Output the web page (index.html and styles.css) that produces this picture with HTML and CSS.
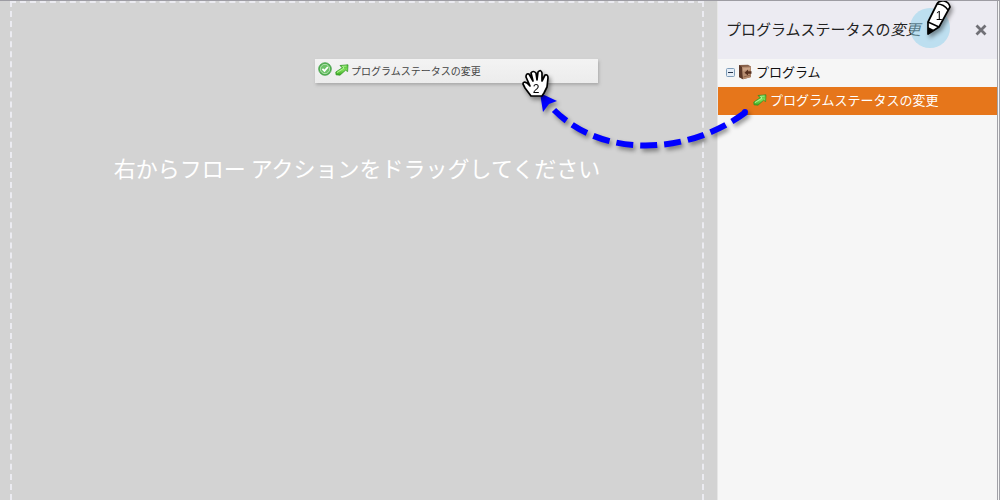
FILE: index.html
```html
<!DOCTYPE html>
<html lang="ja">
<head>
<meta charset="utf-8">
<title>フロー</title>
<link rel="stylesheet" href="styles.css">
</head>
<body>
<svg class="defs" width="0" height="0" aria-hidden="true">
  <defs>
    <linearGradient id="green" x1="0" y1="0" x2="0" y2="1">
      <stop offset="0" stop-color="#4fbf35"/><stop offset=".5" stop-color="#7fe05a"/><stop offset="1" stop-color="#38a71f"/>
    </linearGradient>
    <symbol id="flow-arrow" viewBox="0 0 14 12">
      <path d="M5 1.5 13 .8 12.6 7.6 10.6 6.2 5 11.2 1 10.8 .8 8 7.2 3.8Z" fill="url(#green)" stroke="#2c8f22" stroke-width=".7" stroke-linejoin="round"/>
      <path d="M2 8.6 9 4.1 7.4 2.3 11.6 2" fill="none" stroke="#b8f59c" stroke-width=".9"/>
    </symbol>
  </defs>
</svg>
<div class="app">
  <main class="workspace">
    <section class="dropzone">
      <p class="hint">右からフロー アクションをドラッグしてください</p>
    </section>
    <div class="drag-card">
      <svg class="ok" viewBox="0 0 14 14" aria-hidden="true">
        <circle cx="7" cy="7" r="6.3" fill="#4fae4d" stroke="#43a047" stroke-width=".8"/>
        <circle cx="7" cy="7" r="4.7" fill="#6cc268" stroke="#c9eac6" stroke-width=".8"/>
        <path d="M4.4 6.8 6.5 8.9 9.9 5" fill="none" stroke="#fff" stroke-width="1.8"/>
      </svg>
      <svg class="arrow" aria-hidden="true"><use href="#flow-arrow"/></svg>
      <span class="label">プログラムステータスの変更</span>
    </div>
  </main>
  <aside class="panel">
    <header class="panel-head">
      <h1 class="title">プログラムステータスの<em>変更</em></h1>
      <button class="close" type="button" aria-label="閉じる">
        <svg viewBox="0 0 12 12"><path d="M1.5 1.5 10.5 10.5M10.5 1.5 1.5 10.5" stroke="#707076" stroke-width="2.8"/></svg>
      </button>
    </header>
    <ul class="tree">
      <li class="row">
        <svg class="toggle" viewBox="0 0 9 9" aria-hidden="true">
          <rect x=".5" y=".5" width="8" height="8" rx="1" fill="#e6eef7" stroke="#7f9db9"/><path d="M2 4.5H7" stroke="#24344c"/>
        </svg>
        <svg class="book" viewBox="0 0 14 16" aria-hidden="true">
          <path d="M1 1 10 .8 13 2.5 13 13 5 15.3 1 13Z" fill="#86604a"/>
          <path d="M1 1 4 3 5 15.3 1 13Z" fill="#5b3828"/>
          <path d="M4 3 13 2.5 12.6 13.2 5 15.3Z" fill="#b58c70"/>
          <path d="M5 4.3 12 3.8V5.5L5 7Z" fill="#caa387"/>
          <path d="M13.5 7.2H10V5.4L6.5 8.8 10 11.6V9.8H13.5Z" fill="#56301f"/>
          <path d="M5.5 13 12 11.2" stroke="#8c6248"/>
        </svg>
        <span class="label">プログラム</span>
      </li>
      <li class="row child selected">
        <svg class="arrow" aria-hidden="true"><use href="#flow-arrow"/></svg>
        <span class="label">プログラムステータスの変更</span>
      </li>
    </ul>
  </aside>
  <svg class="callouts" viewBox="0 0 500 160" aria-hidden="true">
    <circle cx="430" cy="28" r="20" fill="#8ed4ee" fill-opacity=".5"/>
    <g class="shadow">
      <path d="M246 112C190 154 104 160 54 110" fill="none" stroke="#00f" stroke-width="6" stroke-dasharray="17 7"/>
      <circle cx="245" cy="112" r="3" fill="#00f"/>
      <path d="M40 93 57 101 49 104 43 112Z" fill="#00f"/>
    </g>
    <g class="shadow">
      <path d="M31 96 25 88 23 84Q23 81 27 83L30 86 26 77Q26 73 29 74L33 81 31 73Q33 70 36 73L37 80 38 72Q41 69 42 73L42 81 45 75Q48 74 48 78L47 87 44 93 42 96Z" fill="#fff" stroke="#000" stroke-width="1.7" stroke-linejoin="round"/>
      <text class="number" x="36" y="93">2</text>
    </g>
    <g class="shadow">
      <path d="M428 34 428 22 437 4Q439 0 444 1T450 7L439 27Z" fill="#fff" stroke="#000" stroke-width="1.7" stroke-linejoin="round"/>
      <path d="M428 34 428 27 434 30Z" fill="#000"/>
      <path d="M428 22 439 27M437 4Q444 4 448 10" fill="none" stroke="#000" stroke-width="1.4"/>
      <text class="number" x="439" y="20">1</text>
    </g>
  </svg>
</div>
</body>
</html>
```
FILE: styles.css
```css
* { box-sizing: border-box; }

body {
  margin: 0;
  font-family: "Noto Sans CJK JP", sans-serif;
  font-weight: 400;
}

.defs { position: absolute; }

.app {
  position: relative;
  display: flex;
  min-height: 100vh;
  overflow: hidden;
  border-top: 1px solid #9d9ca3;
  background: #d3d3d3;
}

.workspace {
  position: relative;
  display: flex;
  flex: 1;
  padding: 0 13px 0 10px;
}

.dropzone {
  flex: 1;
  border: 2px dashed #ebebf1;
  border-bottom: 0;
  padding-top: 147px;
}

.hint {
  margin: 0;
  color: #fff;
  font-size: 22px;
  line-height: 34px;
  text-align: center;
}

.drag-card {
  position: absolute;
  top: 58px;
  right: 119px;
  display: flex;
  align-items: center;
  width: 283px;
  height: 24px;
  padding-left: 3px;
  background: linear-gradient(#f3f3f3, #ececec);
  box-shadow: 1px 2px 3px #aaa;
  color: #444;
  font-size: 10px;
}

.label { padding-bottom: 2px; }

.ok { width: 14px; height: 14px; margin: 0 3px 4px 0; }

.arrow { flex: none; width: 14px; height: 12px; margin-bottom: 2px; }

.drag-card .arrow { margin-right: 2px; }

.panel {
  width: 283px;
  border-left: 1px solid #e6e6e6;
  border-right: 3px double #a2a2a8;
  background: #f6f6f6;
}

.panel-head {
  display: flex;
  align-items: center;
  justify-content: space-between;
  height: 58px;
  padding: 0 10px 0 8px;
  background: #ecebf2;
}

.title {
  margin: 0;
  padding-bottom: 4px;
  color: #222;
  font-size: 15px;
  font-weight: 400;
}

.close {
  display: flex;
  padding: 0;
  border: 0;
  background: none;
}

.close svg { width: 12px; height: 12px; }

.tree {
  margin: 0;
  padding: 0;
  list-style: none;
  font-size: 13px;
}

.row {
  display: flex;
  align-items: center;
  height: 28px;
  padding-left: 8px;
  color: #111;
}

.row .label { padding-bottom: 4px; }

.toggle { width: 9px; height: 9px; margin: 0 3px 2px 0; }

.book { width: 14px; height: 16px; margin: 0 4px 2px 0; }

.child { padding-left: 35px; }

.child .arrow { margin-right: 3px; }

.selected {
  background: #e6761b;
  color: #fff;
}

.callouts {
  position: absolute;
  top: -1px;
  right: 0;
  width: 500px;
  height: 160px;
  pointer-events: none;
}

.shadow { filter: drop-shadow(2px 3px 2px #0006); }

.number {
  font-family: "Liberation Sans", sans-serif;
  font-size: 12px;
  text-anchor: middle;
}
```
